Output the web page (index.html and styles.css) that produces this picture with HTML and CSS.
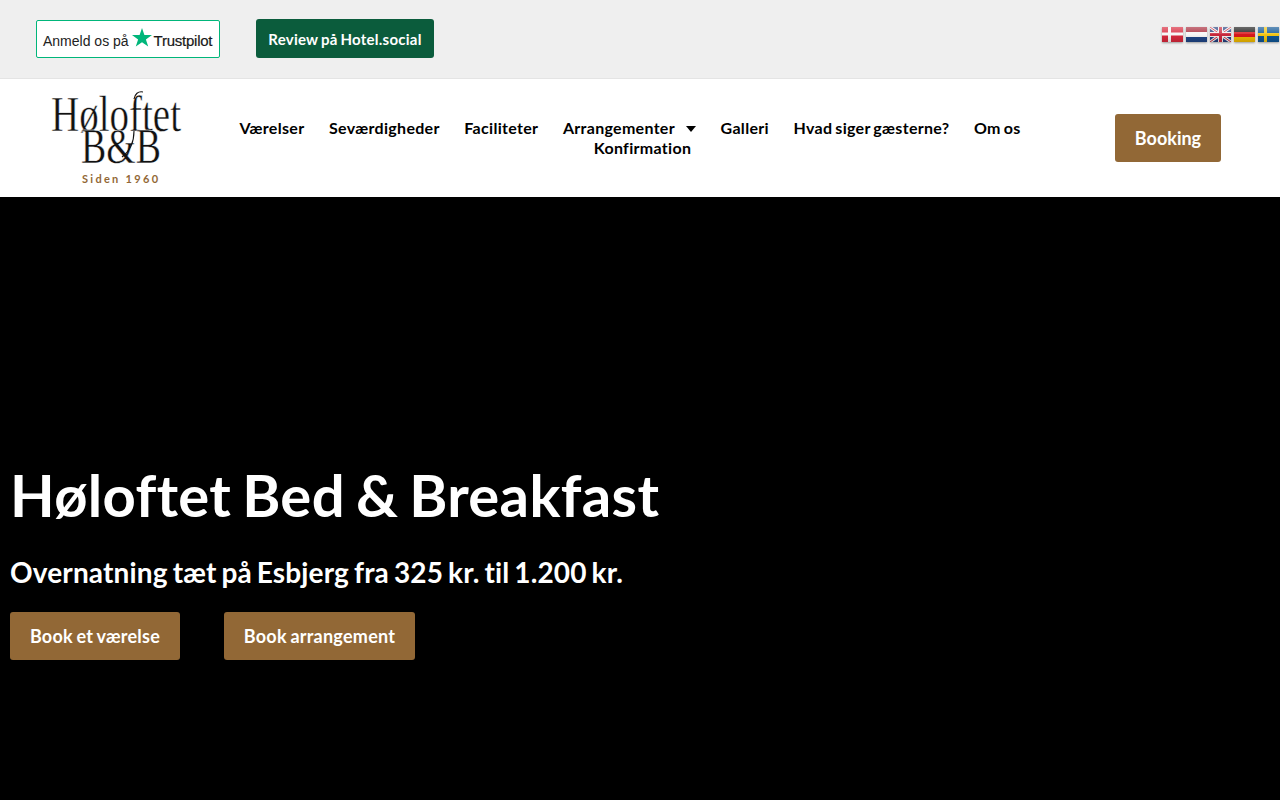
FILE: index.html
```html
<!DOCTYPE html>
<html lang="da">
<head>
<meta charset="utf-8">
<title>Høloftet Bed &amp; Breakfast</title>
<link rel="stylesheet" href="styles.css">
</head>
<body>
<div class="topbar">
  <a class="tp-box" href="#"><span class="tp-label">Anmeld os på</span>
    <svg class="tp-star" width="20" height="19" viewBox="0 0 20 19"><path fill="#00b67a" d="M10 0l2.400 7H20l-6.100 4.400 2.300 7.200L10 14.200l-6.200 4.400 2.300-7.200L0 7h7.600z"/></svg>
    <span class="tp-name">Trustpilot</span></a>
  <a class="hs-btn" href="#">Review på Hotel.social</a>
  <div class="flags">
    <svg class="flag" viewBox="0 0 21 15"><defs><linearGradient id="gloss" x1="0" y1="0" x2="0" y2="1"><stop offset="0" stop-color="#fff" stop-opacity=".35"/><stop offset=".48" stop-color="#fff" stop-opacity=".12"/><stop offset=".5" stop-color="#000" stop-opacity="0"/><stop offset="1" stop-color="#000" stop-opacity=".14"/></linearGradient></defs><rect width="21" height="15" fill="#d8283c"/><rect x="6" width="3" height="15" fill="#f6f6f6"/><rect y="5.500" width="21" height="3" fill="#f6f6f6"/><rect width="21" height="15" fill="url(#gloss)"/></svg>
    <svg class="flag" viewBox="0 0 21 15"><rect width="21" height="5" fill="#a82a3a"/><rect y="5" width="21" height="5" fill="#f6f6f6"/><rect y="10" width="21" height="5" fill="#1f4585"/><rect width="21" height="15" fill="url(#gloss)"/></svg>
    <svg class="flag" viewBox="0 0 21 15"><rect width="21" height="15" fill="#25407f"/><path d="M0 0L21 15M21 0L0 15" stroke="#eee" stroke-width="3"/><path d="M0 0L21 15M21 0L0 15" stroke="#c8283c" stroke-width="1"/><path d="M10.500 0V15M0 7.500H21" stroke="#eee" stroke-width="5"/><path d="M10.500 0V15M0 7.500H21" stroke="#c8283c" stroke-width="3"/><rect width="21" height="15" fill="url(#gloss)"/></svg>
    <svg class="flag" viewBox="0 0 21 15"><rect width="21" height="5" fill="#1a1a1a"/><rect y="5" width="21" height="5" fill="#d8181c"/><rect y="10" width="21" height="5" fill="#eeb800"/><rect width="21" height="15" fill="url(#gloss)"/></svg>
    <svg class="flag" viewBox="0 0 21 15"><rect width="21" height="15" fill="#0f5594"/><rect x="6" width="3" height="15" fill="#f2c414"/><rect y="6" width="21" height="3" fill="#f2c414"/><rect width="21" height="15" fill="url(#gloss)"/></svg>
  </div>
</div>
<header class="header">
  <div class="logo">
    <svg class="logo-mark" width="190" height="108" viewBox="0 0 190 108">
      <text class="logo-text" x="11" y="45.500" font-size="51" textLength="130" lengthAdjust="spacingAndGlyphs">Høloftet</text>
      <text class="logo-text" x="41" y="78" font-size="50" textLength="80" lengthAdjust="spacingAndGlyphs">B&amp;B</text>
      <path d="M94 46C94 58 90 66 82 72M94 14C95 9 98 6 103 7" fill="none" stroke="#111" stroke-width="1.100"/>
      <text class="logo-since" x="42" y="98">Siden 1960</text>
    </svg>
  </div>
  <nav class="nav">
    <a href="#">Værelser</a>
    <a href="#">Seværdigheder</a>
    <a href="#">Faciliteter</a>
    <a href="#" class="has-sub"><span>Arrangementer</span><svg class="caret" width="10" height="6" viewBox="0 0 10 6"><path d="M0 0h10L5 6z"/></svg></a>
    <a href="#">Galleri</a>
    <a href="#">Hvad siger gæsterne?</a>
    <a href="#">Om os</a>
    <a href="#" class="nav-last">Konfirmation</a>
  </nav>
  <a class="btn booking" href="#">Booking</a>
</header>
<main class="hero">
  <h1>Høloftet Bed &amp; Breakfast</h1>
  <h2>Overnatning tæt på Esbjerg fra 325 kr. til 1.200 kr.</h2>
  <div class="hero-btns">
    <a class="btn btn-room" href="#">Book et værelse</a>
    <a class="btn btn-event" href="#">Book arrangement</a>
  </div>
</main>
</body>
</html>
```
FILE: styles.css
```css
* { box-sizing: border-box; }
html, body { margin: 0; padding: 0; height: 100%; }
body { font-family: Lato, "Liberation Sans", sans-serif; background: #000; overflow: hidden; }
a { text-decoration: none; color: inherit; }

.topbar { height: 79px; background: #efefef; border-bottom: 1px solid #e4e4e4; display: flex; align-items: flex-start; padding: 19px 1px 0 36px; }
.tp-box { width: 184px; height: 38px; margin-top: 1px; background: #fff; border: 1px solid #00b67a; border-radius: 2px; display: flex; align-items: center; padding: 0 0 0 6px; color: #222; }
.tp-label { font-family: "Liberation Sans", sans-serif; font-size: 14px; margin-top: 3px; }
.tp-star { margin: -3px 0 0 3px; flex: none; }
.tp-name { font-family: "Liberation Sans", sans-serif; font-size: 15px; color: #191919; letter-spacing: -.25px; margin: 3px 0 0 2px; -webkit-text-stroke: .2px #191919; }
.hs-btn { margin-left: 36px; width: 178px; height: 39px; background: #0b5c3c; color: #fff; border-radius: 3px; font-weight: 700; font-size: 15px; letter-spacing: .25px; word-spacing: -1px; display: flex; align-items: center; justify-content: center; }
.flags { margin-left: auto; display: flex; gap: 3px; margin-top: 8px; }
.flag { width: 21px; height: 15px; display: block; box-shadow: 0 1px 2px rgba(0,0,0,.35); }

.header { height: 118px; background: #fff; display: flex; align-items: flex-start; }
.logo { width: 230px; flex: none; padding: 6px 0 0 40px; }
.logo-mark { display: block; }
.logo-text { font-family: "Liberation Serif", serif; fill: #111; stroke: #fff; stroke-width: .45px; }
.logo-since { font-family: Lato, sans-serif; font-weight: 700; font-size: 11px; letter-spacing: 2.300px; fill: #926836; }

.nav { width: 800px; flex: none; margin-top: 39px; display: flex; flex-wrap: wrap; justify-content: center; column-gap: 24.600px; font-weight: 700; font-size: 16px; line-height: 20px; color: #000; letter-spacing: .3px; word-spacing: -1.200px; }
.has-sub { display: inline-flex; align-items: center; gap: 11px; }
.caret { margin-top: 1px; }
.nav-last { margin-left: 25px; }

.btn { display: inline-flex; align-items: center; justify-content: center; height: 48px; background: #926836; color: #fff; border-radius: 3px; font-weight: 700; font-size: 18px; letter-spacing: .25px; word-spacing: -1px; }
.booking { width: 106px; margin: 35px 0 0 85px; letter-spacing: 0; }
.btn-room { width: 170px; }
.btn-event { width: 191px; }

.hero { height: 603px; background: #000; color: #fff; padding: 262px 0 0 10px; }
.hero h1 { margin: 0; font-size: 58px; line-height: 72px; font-weight: 700; letter-spacing: .35px; word-spacing: -3.500px; }
.hero h2 { margin: 24px 0 0; font-size: 28px; line-height: 35px; font-weight: 700; letter-spacing: .15px; word-spacing: -2px; }
.hero-btns { display: flex; gap: 44px; margin-top: 22px; }
```
